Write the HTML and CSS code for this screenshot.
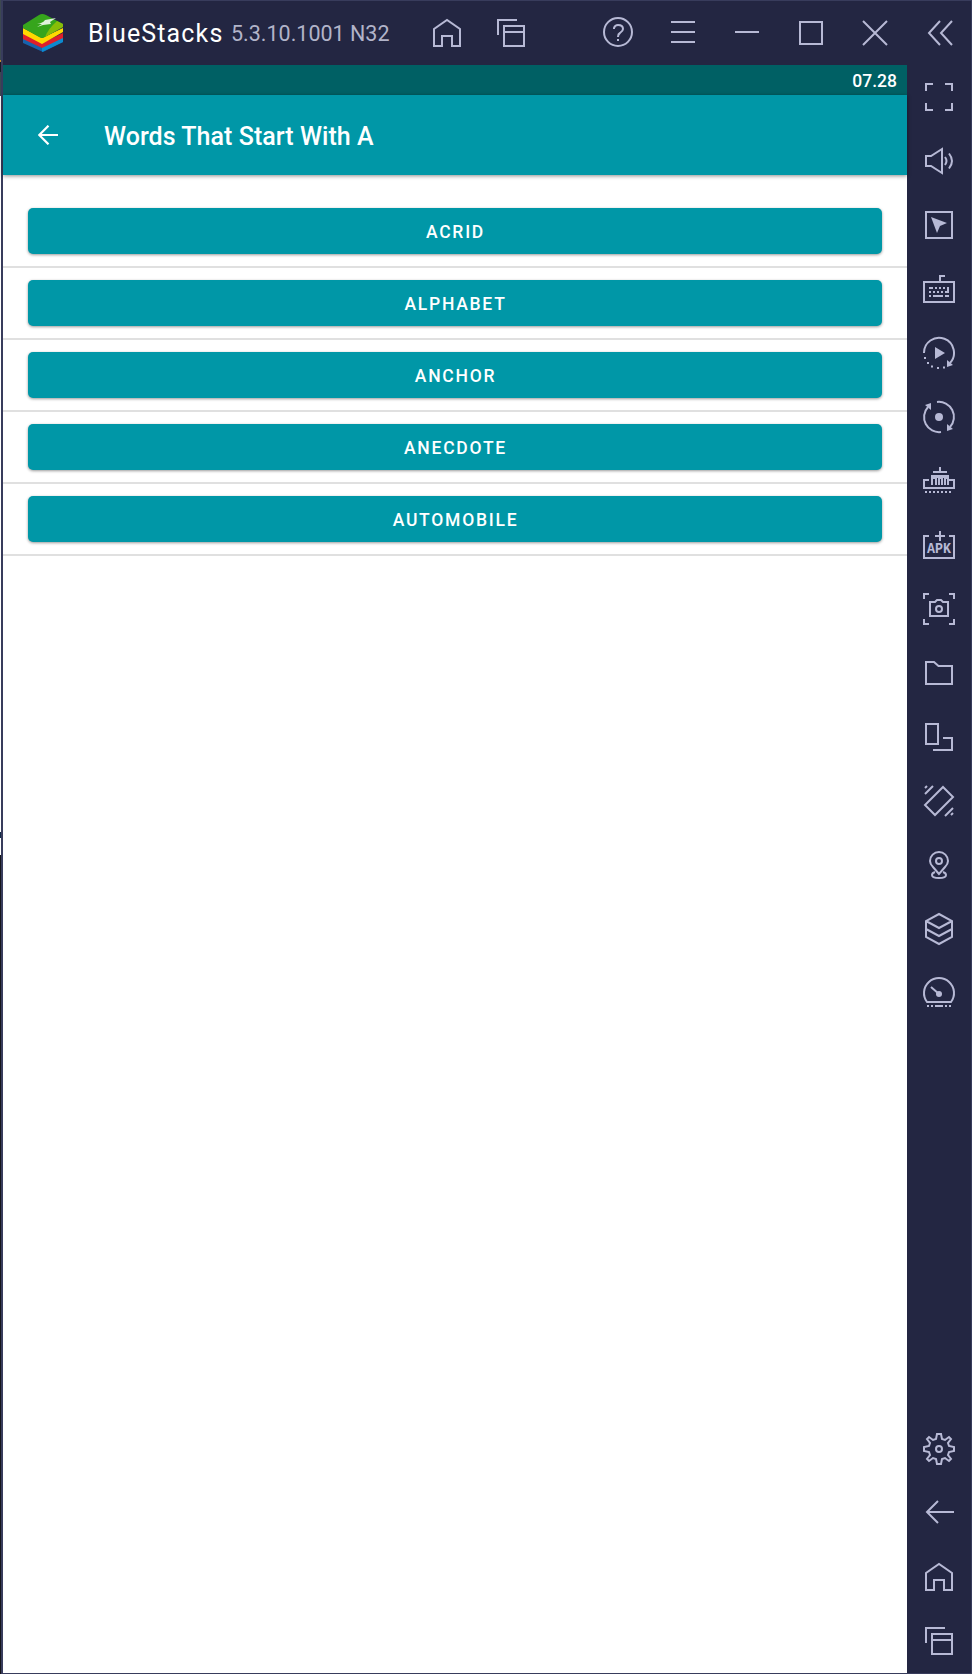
FILE: index.html
```
<!DOCTYPE html>
<html lang="en">
<head>
<meta charset="utf-8">
<title>BlueStacks</title>
<link rel="stylesheet" href="styles.css">
</head>
<body>
<div class="desktop">
  <div class="backdrop"></div>
  <div class="window">
    <header class="titlebar">
      <svg class="logo" viewBox="0 0 40 38">
        <path fill="#1763ad" d="M0 24L20 34L40 24V28L20 38L0 29Z"/>
        <path fill="#0c8bcf" d="M19 33L40 23V28L19 38Z"/>
        <path fill="#df1f2b" d="M0 19L19 29L40 19V24L19 34L0 25Z"/>
        <path fill="#ffd900" d="M0 14L19 24L40 14V18L19 30L0 20Z"/>
        <path fill="#36a51c" d="M0 11L16 1Q19 -1 23 1L40 10V13L22 23Q19 25 16 23L0 14Z"/>
        <path fill="#87bd08" d="M40 10V13L22 23Q25 15 34 7Z"/>
        <path fill="#fff" opacity=".85" d="M14 10Q20 9 22 6L33 4L27 8L28 10L20 11L14 13L19 10Z"/>
      </svg>
      <span class="brand">BlueStacks</span>
      <span class="version">5.3.10.1001 N32</span>
      <nav class="tools">
        <span class="cell"><svg class="icon" viewBox="-18 -18 36 36"><path d="M-13 13V-4L0 -13L13 -4V13H5V3H-5V13Z"/></svg></span>
        <span class="cell"><svg class="icon" viewBox="-18 -18 36 36"><path d="M-13 2V-13H6M-7 -7H13V13H-7ZM-7 -1H13"/></svg></span>
      </nav>
      <nav class="controls">
        <span class="cell"><svg class="icon" viewBox="-18 -18 36 36"><circle cx="-1" cy="-1" r="14"/><path d="M-5 -4V-5Q-4 -8 -1 -8Q4 -8 4 -4Q4 -2 1 0Q-1 1 -1 4M-1 6V8"/></svg></span>
        <span class="cell"><svg class="icon" viewBox="-18 -18 36 36"><path d="M-12 -11H12M-12 -1H12M-12 9H12"/></svg></span>
        <span class="cell"><svg class="icon" viewBox="-18 -18 36 36"><path d="M-12 -1H12"/></svg></span>
        <span class="cell"><svg class="icon" viewBox="-18 -18 36 36"><path d="M-11 -11H11V11H-11Z"/></svg></span>
        <span class="cell"><svg class="icon" viewBox="-18 -18 36 36"><path d="M-12 -12L12 12M12 -12L-12 12"/></svg></span>
        <span class="cell"><svg class="icon" viewBox="-18 -18 36 36"><path d="M1 -12L-10 0L1 12M13 -12L2 0L13 12"/></svg></span>
      </nav>
    </header>
    <div class="content">
      <main class="screen">
        <div class="status">07.28</div>
        <div class="appbar">
          <svg class="back" viewBox="0 0 20 20"><path d="M20 10H1M10.500 0.700L1.200 10L10.500 19.300"/></svg>
          <h1 class="title">Words That Start With A</h1>
        </div>
        <div class="list">
          <div class="row"><button class="word">ACRID</button></div>
          <div class="row"><button class="word">ALPHABET</button></div>
          <div class="row"><button class="word">ANCHOR</button></div>
          <div class="row"><button class="word">ANECDOTE</button></div>
          <div class="row"><button class="word">AUTOMOBILE</button></div>
        </div>
      </main>
      <aside class="sidebar">
        <div class="group">
          <span class="cell"><svg class="icon" viewBox="-18 -18 36 36"><path d="M-13 -6V-13H-6M6 -13H13V-6M13 6V13H6M-6 13H-13V6"/></svg></span>
          <span class="cell"><svg class="icon" viewBox="-18 -18 36 36"><path d="M-13 -5H-8L3 -12V12L-8 5H-13ZM6 -4Q9 0 6 4M10 -7.500Q16 0 10 7.500"/></svg></span>
          <span class="cell"><svg class="icon" viewBox="-18 -18 36 36"><path d="M-13 -13H13V13H-13Z"/><path class="solid" d="M-8 -8L8 -2L1 1L-2 8Z"/></svg></span>
          <span class="cell"><svg class="icon" viewBox="-18 -18 36 36"><path d="M-15 -7H15V13H-15ZM1 -7V-13H6M-10 -1H-6M-4 -1H-2M0 -1H2M4 -1H6M9 -2V4M-10 3H-8M-6 3H-4M-2 3H0M2 3H4M6 3H10M-10 7H-8M-6 7H4M6 7H10"/></svg></span>
          <span class="cell"><svg class="icon" viewBox="-18 -18 36 36"><path d="M-15 0A15 15 0 1 1 11 10"/><path class="solid" d="M8 7L14 12L8 14ZM-4 -6L6 0L-4 6ZM-15 4h2v2h-2zM-12 9h2v2h-2zM-8 12.500h2v2h-2zM-2 14h2v2h-2zM4 13.500h2v2h-2z"/></svg></span>
          <span class="cell"><svg class="icon" viewBox="-18 -18 36 36"><path d="M-2 -15A15 15 0 0 1 11 10M2 15A15 15 0 0 1 -11 -10"/><circle class="solid" r="4"/><path class="solid" d="M8 7L14 12L8 14ZM-8 -7L-14 -12L-8 -14Z"/></svg></span>
          <span class="cell"><svg class="icon" viewBox="-18 -18 36 36"><path d="M-10 -1H-15V7H15V-1H10M1 -14V-9M-6 -9H8"/><path class="solid" d="M-8 -6H10V4H8V-2H7V4H5V-3H4V4H2V-2H1V4H-1V-3H-2V4H-4V-2H-6V4H-8Z"/><path stroke-dasharray="2 2" d="M-14 11H14"/></svg></span>
          <span class="cell"><svg class="icon" viewBox="-18 -18 36 36"><path d="M-10 -9H-15V13H15V-9H10M1 -14V-4M-4 -9H6"/><text class="apk" x="-12" y="8" textLength="24" lengthAdjust="spacingAndGlyphs">APK</text></svg></span>
          <span class="cell"><svg class="icon" viewBox="-18 -18 36 36"><path d="M-15 -10V-15H-10M10 -15H15V-10M15 10V15H10M-10 15H-15V10M-9 -7H-4L-2 -9H2L4 -7H9V7H-9Z"/><circle r="3"/></svg></span>
          <span class="cell"><svg class="icon" viewBox="-18 -18 36 36"><path d="M-13 -11H-5L-0.500 -7H13V11H-13Z"/></svg></span>
          <span class="cell"><svg class="icon" viewBox="-18 -18 36 36"><path d="M-13 -13H-1V7H-13ZM4 1H13V13H-6"/></svg></span>
          <span class="cell"><svg class="icon" viewBox="-18 -18 36 36"><path d="M4 -14L14 -4L-4 14L-14 4ZM-14 -7L-6 -15M-14 -13L-12 -15M6 15L14 7M12 14L14 12"/></svg></span>
          <span class="cell"><svg class="icon" viewBox="-18 -18 36 36"><path d="M0 9L-6 2Q-9 -1 -9 -4A9 9 0 0 1 9 -4Q9 -1 6 2ZM-4 7Q-7 8 -7 10C-7 14 7 14 7 10Q7 8 4 7"/><circle cy="-4" r="3"/></svg></span>
          <span class="cell"><svg class="icon" viewBox="-18 -18 36 36"><path d="M0 -15L13 -8V8L0 15L-13 8V-8ZM-13 -8L0 -1L13 -8M-13 0L0 7L13 0"/></svg></span>
          <span class="cell"><svg class="icon" viewBox="-18 -18 36 36"><path d="M-12 9A15 15 0 1 1 12 9ZM-8 -6L0 1M-12 13H-10M-8 13H-6M-4 13H4M6 13H8M10 13H12"/><circle class="solid" cy="1" r="3"/></svg></span>
        </div>
        <div class="group">
          <span class="cell"><svg class="icon" viewBox="-18 -18 36 36"><path d="M-2 -15H2L3 -10L6 -9L10 -12L12 -10L9 -6L10 -3L15 -2V2L10 3L9 6L12 10L10 12L6 9L3 10L2 15H-2L-3 10L-6 9L-10 12L-12 10L-9 6L-10 3L-15 2V-2L-10 -3L-9 -6L-12 -10L-10 -12L-6 -9L-3 -10Z"/><circle r="3"/></svg></span>
          <span class="cell"><svg class="icon" viewBox="-18 -18 36 36"><path d="M15 -1H-12M-1 -12L-12 -1L-1 10"/></svg></span>
          <span class="cell"><svg class="icon" viewBox="-18 -18 36 36"><path d="M-13 13V-4L0 -13L13 -4V13H5V3H-5V13Z"/></svg></span>
          <span class="cell"><svg class="icon" viewBox="-18 -18 36 36"><path d="M-13 2V-13H6M-7 -7H13V13H-7ZM-7 -1H13"/></svg></span>
        </div>
      </aside>
    </div>
  </div>
</div>
</body>
</html>
```
FILE: styles.css
```
* { box-sizing: border-box; }
body { margin: 0; font-family: Roboto, sans-serif; }
.desktop { display: flex; width: 972px; height: 1674px; overflow: hidden; }
.backdrop {
  width: 1px;
  background: linear-gradient(#3c4850 0 60px, #c88b2c 60px 62px, #151a24 62px 72px, #3c4850 72px 96px, #fff 96px 832px, #152a48 832px 838px, #fff 838px 855px, #15151b 855px);
}
.window {
  display: flex;
  flex-direction: column;
  width: 971px;
  border: 1px solid #383c5c;
  border-left-width: 2px;
  background: #232642;
}
.titlebar { display: flex; align-items: center; height: 64px; padding-left: 20px; }
.logo { width: 40px; height: 38px; }
.brand { width: 143px; margin-left: 25px; color: #fff; font-size: 25px; letter-spacing: 1.15px; white-space: nowrap; }
.version { color: #b2b4c9; font-size: 21.5px; letter-spacing: 0; white-space: nowrap; }
.tools { display: flex; margin-left: auto; }
.controls { display: flex; margin-left: 44px; }
.cell { display: flex; align-items: center; justify-content: center; width: 64px; height: 64px; }
.icon { display: block; width: 36px; height: 36px; fill: none; stroke: #b7b9d5; stroke-width: 2; }
.solid { fill: #b7b9d5; stroke: none; }
.apk { fill: #b7b9d5; stroke: none; font: bold 15px "Liberation Mono", monospace; }
.content { display: flex; flex: 1; }
.screen { width: 904px; background: #fff; }
.status { height: 30px; padding-right: 10px; background: #006064; color: #fff; font-size: 17.5px; font-weight: 500; line-height: 32px; text-align: right; }
.appbar { display: flex; align-items: center; height: 80px; padding-left: 35px; background: #0097a7; box-shadow: 0 1px 4px rgba(0, 0, 0, 0.45); }
.back { width: 20px; height: 20px; fill: none; stroke: #fff; stroke-width: 2.2; }
.title { margin: 3px 0 0 46px; color: #fff; font-size: 25px; font-weight: 500; line-height: 30px; letter-spacing: 0.05px; white-space: nowrap; }
.list { padding-top: 21px; }
.row { height: 72px; padding: 12px 25px 0; border-bottom: 2px solid #e0e0e0; }
.word {
  display: block;
  width: 100%;
  height: 45.5px;
  padding: 2.5px 0 0 1px;
  border: 0;
  border-radius: 5px;
  background: #0097a7;
  box-shadow: 0 1px 3px rgba(0, 0, 0, 0.4);
  color: #fff;
  font: 500 17.5px Roboto, sans-serif;
  letter-spacing: 1.75px;
}
.sidebar { display: flex; flex-direction: column; justify-content: space-between; width: 64px; }
```
